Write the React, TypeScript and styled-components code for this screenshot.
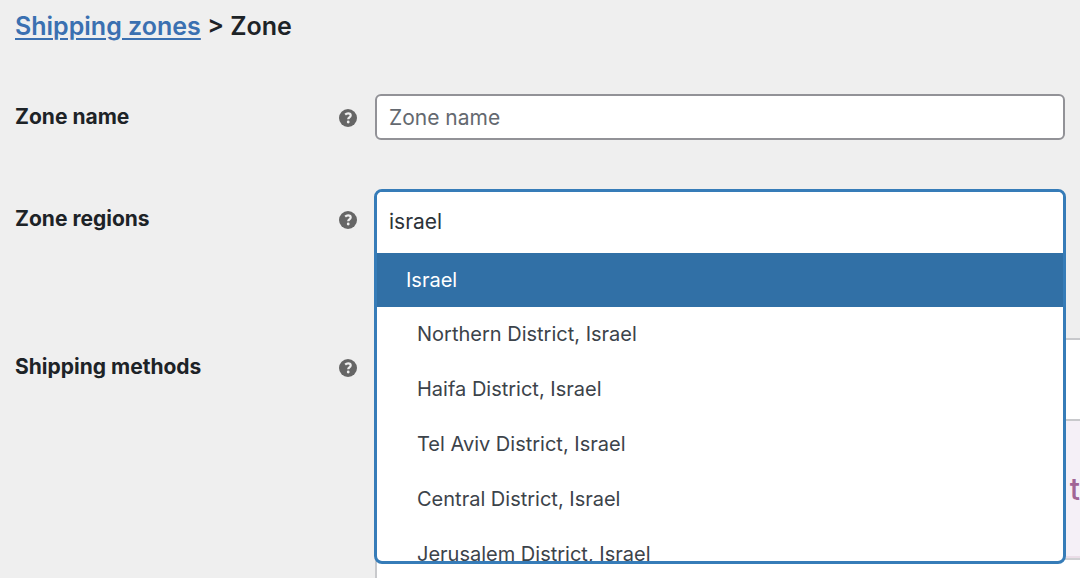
import React, { useState } from "react";
import styled, { createGlobalStyle } from "styled-components";

const GlobalStyle = createGlobalStyle`
  *, *::before, *::after { box-sizing: border-box; }
  body {
    margin: 0;
    background: #efefef;
    color: #1d2327;
    font-family: Inter, "Liberation Sans", sans-serif;
    font-size: 20px;
  }
`;

const Page = styled.main`
  height: 100vh;
  overflow: hidden;
  padding: 9px 15px 0;
`;

const Breadcrumb = styled.h2`
  margin: 0 0 50px;
  font-size: 25px;
  line-height: 34px;
  font-weight: 600;
`;

const ZonesLink = styled.a`
  color: #3a70b1;
  text-decoration: underline;
  text-decoration-thickness: 2px;
  text-underline-offset: 3px;
`;

const Row = styled.div<{ $minHeight: number }>`
  display: grid;
  grid-template-columns: 360px minmax(0, 1fr);
  min-height: ${(p) => p.$minHeight}px;
`;

const LabelCell = styled.div<{ $top: number }>`
  display: flex;
  align-items: flex-start;
  justify-content: space-between;
  padding: ${(p) => p.$top}px 18px 0 0;
`;

const labelText = `
  font-size: 21px;
  line-height: 28px;
  font-weight: 700;
`;

const Label = styled.label`
  ${labelText}
`;

const Caption = styled.span`
  ${labelText}
`;

const HelpButton = styled.button`
  display: flex;
  margin: 6px 0 0;
  padding: 0;
  border: 0;
  background: none;
  color: #666;
`;

const NameInput = styled.input`
  display: block;
  width: 100%;
  height: 46px;
  padding: 0 12px;
  border: 2px solid #929297;
  border-radius: 6px;
  background: #fff;
  color: #2c3338;
  font: inherit;
  font-size: 21px;
  outline: none;

  &::placeholder {
    color: #646970;
    opacity: 1;
  }
`;

const NameField = styled.div`
  padding-top: 1px;
`;

const RegionField = styled.div`
  position: relative;
`;

const Combobox = styled.div`
  position: absolute;
  z-index: 1;
  top: 0;
  left: -1px;
  right: -1px;
  overflow: hidden;
  border: 3px solid #367cb8;
  border-radius: 8px;
  background: #fff;
`;

const SearchInput = styled.input`
  display: block;
  width: 100%;
  height: 61px;
  padding: 0 12px 2px;
  border: 0;
  background: #fff;
  color: #2c3338;
  font: inherit;
  font-size: 21px;
  outline: none;
`;

const OptionList = styled.ul`
  height: 308px;
  margin: 0;
  padding: 0;
  overflow: hidden;
  list-style: none;
`;

const Country = styled.li`
  padding: 0 29px;
  background: #3170a6;
  color: #fff;
  line-height: 54px;
`;

const District = styled.li`
  padding: 0 40px;
  color: #3c434a;
  line-height: 55px;
`;

const MethodsPanel = styled.section`
  margin: 1px -15px 0 0;
  border: 2px solid #c8c9cc;
  border-right: 0;
  background: #fff;
`;

const PanelHeader = styled.div`
  height: 79px;
`;

const Notice = styled.p`
  height: 139px;
  margin: 0;
  border-top: 2px solid #c8c9cc;
  border-bottom: 2px solid #ebdde8;
  background: #f5f0f7;
  color: #a16696;
  font-size: 30px;
  font-weight: 500;
  line-height: 136px;
  text-align: right;
`;

const PanelFooter = styled.div`
  height: 80px;
  border-top: 2px solid #d0d0d3;
`;

const districts = ["Northern", "Haifa", "Tel Aviv", "Central", "Jerusalem"];

function Help({ topic }: { topic: string }) {
  return (
    <HelpButton type="button" aria-label={`Help: ${topic}`}>
      <svg width="18" height="18" viewBox="0 0 18 18" aria-hidden="true">
        <circle cx="9" cy="9" r="9" fill="currentColor" />
        <path
          d="M6.2 5.6C7 4.8 8 4.4 9.1 4.4c1.6 0 2.6.8 2.6 2.1 0 1-.6 1.5-1.4 2-.8.5-1.1.8-1.1 1.8"
          fill="none"
          stroke="#efefef"
          strokeWidth="2.2"
        />
        <circle cx="9.2" cy="13" r="1.4" fill="#efefef" />
      </svg>
    </HelpButton>
  );
}

export default function App() {
  const [name, setName] = useState("");
  const [query, setQuery] = useState("israel");

  return (
    <>
      <GlobalStyle />
      <Page>
        <Breadcrumb>
          <ZonesLink href="#zones">Shipping zones</ZonesLink> &gt; Zone
        </Breadcrumb>

        <Row $minHeight={96}>
          <LabelCell $top={10}>
            <Label htmlFor="zone-name">Zone name</Label>
            <Help topic="Zone name" />
          </LabelCell>
          <NameField>
            <NameInput
              id="zone-name"
              type="text"
              placeholder="Zone name"
              value={name}
              onChange={(e) => setName(e.target.value)}
            />
          </NameField>
        </Row>

        <Row $minHeight={148}>
          <LabelCell $top={16}>
            <Label htmlFor="zone-regions">Zone regions</Label>
            <Help topic="Zone regions" />
          </LabelCell>
          <RegionField>
            <Combobox>
              <SearchInput
                id="zone-regions"
                type="text"
                role="combobox"
                aria-expanded="true"
                aria-controls="region-options"
                value={query}
                onChange={(e) => setQuery(e.target.value)}
              />
              <OptionList id="region-options" role="listbox">
                <Country role="option" aria-selected="true">
                  Israel
                </Country>
                {districts.map((d) => (
                  <District key={d} role="option" aria-selected="false">
                    {`${d} District, Israel`}
                  </District>
                ))}
              </OptionList>
            </Combobox>
          </RegionField>
        </Row>

        <Row $minHeight={240}>
          <LabelCell $top={16}>
            <Caption>Shipping methods</Caption>
            <Help topic="Shipping methods" />
          </LabelCell>
          <MethodsPanel>
            <PanelHeader />
            <Notice>t</Notice>
            <PanelFooter />
          </MethodsPanel>
        </Row>
      </Page>
    </>
  );
}
